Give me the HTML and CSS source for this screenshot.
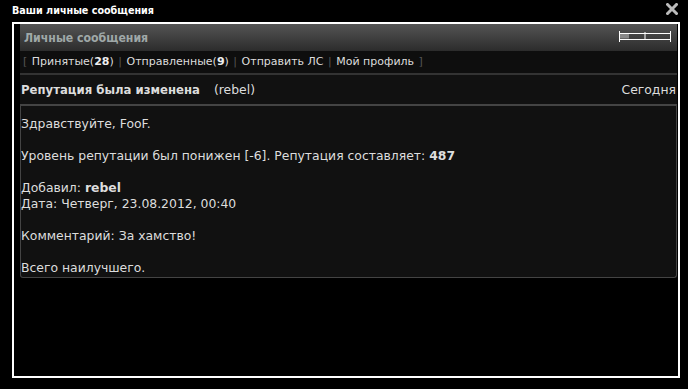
FILE: index.html
```html
<!DOCTYPE html>
<html>
<head>
<meta charset="utf-8">
<link rel="stylesheet" href="styles.css">
</head>
<body>
<div class="titlebar">
  <span class="title">Ваши личные сообщения</span>
  <svg class="close" width="12" height="12" viewBox="0 0 12 12"><path d="M1.5 1.5 L10.5 10.5 M10.5 1.5 L1.5 10.5" stroke="#bbb" stroke-width="3" stroke-linecap="square"/></svg>
</div>
<div class="frame">
  <div class="panel">
    <div class="phead">
      <span class="ptitle">Личные сообщения</span>
      <svg class="slider" width="52" height="11" viewBox="0 0 52 11"><rect x="1" y="2.5" width="9" height="5" fill="#888"/><path d="M0.5 0 V11 M51.5 0 V11 M26 1 V9 M0 2.5 H52 M0 8.5 H52" stroke="#fff" stroke-width="1"/></svg>
    </div>
    <div class="nav">
      <span class="br">[</span> Принятые(<b>28</b>) <span class="br">|</span> Отправленные(<b>9</b>) <span class="br">|</span> Отправить ЛС <span class="br">|</span> Мой профиль <span class="br">]</span>
    </div>
    <div class="mhead">
      <span class="subj"><b>Репутация была изменена</b><span class="from">(rebel)</span></span>
      <span class="date">Сегодня</span>
    </div>
    <div class="mbody">
      <p>Здравствуйте, FooF.</p>
      <p>Уровень репутации был понижен [-6]. Репутация составляет: <b>487</b></p>
      <p>Добавил: <b>rebel</b><br>Дата: Четверг, 23.08.2012, 00:40</p>
      <p>Комментарий: За хамство!</p>
      <p class="last">Всего наилучшего.</p>
    </div>
  </div>
</div>
</body>
</html>
```

FILE: styles.css
```css
html, body {
  margin: 0;
  padding: 0;
  background: #000;
}
body {
  font-family: "DejaVu Sans", Verdana, sans-serif;
  font-size: 11px;
  color: #ddd;
  width: 688px;
  height: 389px;
  overflow: hidden;
}
.titlebar {
  height: 22px;
  display: flex;
  align-items: center;
  justify-content: space-between;
  padding: 0 10px 2px 12px;
  box-sizing: border-box;
}
.title {
  color: #fff;
  font-family: "DejaVu Sans Condensed", "DejaVu Sans", sans-serif;
  font-weight: bold;
  font-size: 10.7px;
}
.close {
  display: block;
  margin-top: -2px;
}
.frame {
  margin-left: 12px;
  width: 668px;
  height: 356px;
  box-sizing: border-box;
  border: 2px solid #fff;
  padding: 0 1px 0 6px;
  overflow: hidden;
}
.panel {
  display: flex;
  flex-direction: column;
}
.phead {
  height: 27px;
  background: linear-gradient(#545454, #2c2c2c);
  display: flex;
  align-items: center;
  justify-content: space-between;
  padding: 0 6px 0 4px;
}
.ptitle {
  color: #9fa8a8;
  font-family: "DejaVu Sans Condensed", "DejaVu Sans", sans-serif;
  font-weight: bold;
  font-size: 12.2px;
}
.slider {
  display: block;
  margin-top: -2px;
}
.nav {
  height: 22px;
  line-height: 21px;
  background: #0e0e0e;
  padding-left: 2px;
  border-bottom: 2px solid #333;
  white-space: nowrap;
}
.nav .br {
  color: #555;
  margin: 0 1px;
}
.nav b {
  color: #eee;
}
.mhead {
  height: 29px;
  background: #111;
  display: flex;
  align-items: center;
  justify-content: space-between;
  padding: 0 1px 0 1px;
  border-bottom: 2px solid #444;
  font-size: 12.4px;
}
.subj b {
  color: #ddd;
  font-size: 11.7px;
}
.from {
  margin-left: 14px;
}
.mbody {
  background: #111;
  border: 1px solid #444;
  border-top: none;
  border-radius: 0 0 3px 3px;
  padding: 10px 0 1px 0;
  line-height: 16px;
  font-size: 12.4px;
}
.mbody p {
  margin: 0 0 16px 0;
}
.mbody p.last {
  margin-bottom: 0;
}
```
